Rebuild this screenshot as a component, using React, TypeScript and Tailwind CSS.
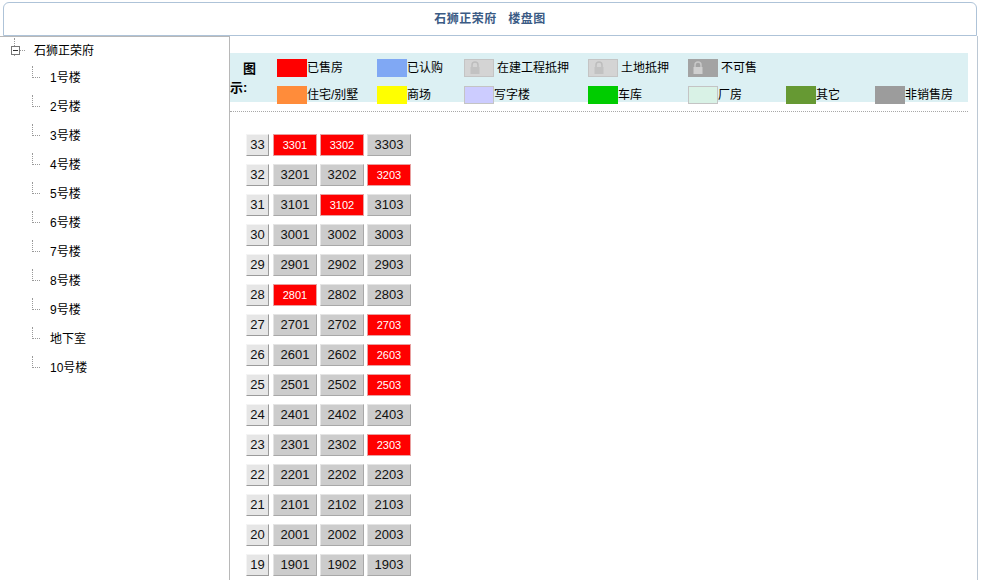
import React from "react";

const font = { fontFamily: '"Liberation Sans", "Noto Sans CJK SC", sans-serif' };

const treeItems = ["1号楼", "2号楼", "3号楼", "4号楼", "5号楼", "6号楼", "7号楼", "8号楼", "9号楼", "地下室", "10号楼"];

const sold = ["3301", "3302", "3203", "3102", "2801", "2703", "2603", "2503", "2303"];

function Lock({ dark }: { dark?: boolean }) {
  return (
    <svg width="12" height="14" viewBox="0 0 12 14" className="ml-[4px]">
      <path d="M3 6V4a3 3 0 0 1 6 0v2" fill="none" stroke={dark ? "#c8c8c8" : "#bdbdbd"} strokeWidth="1.5" />
      <rect x="1.5" y="6" width="9" height="7" fill={dark ? "#cfcfcf" : "#c2c2c2"} />
    </svg>
  );
}

type Legend = { label: string; color: string; lock?: boolean; dark?: boolean; border?: boolean };

const legendRow1: Legend[] = [
  { label: "已售房", color: "bg-[#ff0000]" },
  { label: "已认购", color: "bg-[#80a8f4]" },
  { label: "在建工程抵押", color: "bg-[#d4d4d4]", lock: true, border: true },
  { label: "土地抵押", color: "bg-[#d4d4d4]", lock: true, border: true },
  { label: "不可售", color: "bg-[#a3a3a3]", lock: true, dark: true },
];

const legendRow2: Legend[] = [
  { label: "住宅/别墅", color: "bg-[#ff8c3a]" },
  { label: "商场", color: "bg-[#ffff00]" },
  { label: "写字楼", color: "bg-[#ccccff]", border: true },
  { label: "车库", color: "bg-[#00cc00]" },
  { label: "厂房", color: "bg-[#d9f2e6]", border: true },
  { label: "其它", color: "bg-[#669933]" },
  { label: "非销售房", color: "bg-[#9c9c9c]" },
];

function LegendItem({ item }: { item: Legend }) {
  return (
    <div className="flex items-center h-[27px]">
      <div
        className={`w-[30px] h-[18px] flex items-center ${item.color} ${item.border ? "border border-[#c4c4c4]" : ""}`}
      >
        {item.lock && <Lock dark={item.dark} />}
      </div>
      <span className={`text-[12px] text-black ${item.lock ? "ml-[3px]" : ""}`}>{item.label}</span>
    </div>
  );
}

function Unit({ no }: { no: string }) {
  const isSold = sold.includes(no);
  return isSold ? (
    <div className="w-[44px] h-[22px] flex items-center justify-center bg-[#ff0000] border border-[#e8a0a0] text-white text-[11px]">
      {no}
    </div>
  ) : (
    <div className="w-[44px] h-[22px] flex items-center justify-center bg-[#cccccc] border border-t-[#e4e4e4] border-l-[#e4e4e4] border-b-[#a8a8a8] border-r-[#a8a8a8] text-[#111] text-[13px]">
      {no}
    </div>
  );
}

export default function App() {
  // only the floors that fit in the window
  const floors = Array.from({ length: 15 }, (_, i) => 33 - i);

  return (
    <div className="w-[986px] h-[580px] overflow-hidden bg-white" style={font}>
      <div className="mx-[3px] mt-[2px] w-[974px] h-[34px] border border-[#aec3d8] rounded-t-[6px] flex items-center justify-center">
        <span className="text-[12px] font-bold text-[#3b5b85] tracking-[0.5px]">石狮正荣府&nbsp;&nbsp;&nbsp;楼盘图</span>
      </div>

      <div className="flex h-[544px]">
        <div className="w-[230px] border-r border-t border-[#b8b8b8] pt-[4px]">
          <div className="flex items-center h-[19px]">
            <div className="w-[15px] h-[18px] border-r border-dotted border-[#999] -mt-[8px]" />
            <div className="w-[9px] h-[9px] border border-[#777] flex items-center justify-center -ml-[4px] bg-white">
              <div className="w-[5px] h-px bg-[#333]" />
            </div>
            <div className="w-[5px] border-t border-dotted border-[#999]" />
            <span className="ml-[9px] text-[12px] text-black">石狮正荣府</span>
          </div>
          <div className="flex flex-col">
            {treeItems.map((t) => (
              <div key={t} className="flex items-end h-[29px]">
                <div className="ml-[32px] w-[8px] h-[12px] border-l border-b border-dotted border-[#999] mb-[11px]" />
                <span className="ml-[10px] text-[12px] text-black leading-[14px] mb-[4px]">{t}</span>
              </div>
            ))}
          </div>
        </div>

        <div className="w-[748px] border-r border-[#bcc8d4] pr-[9px] pt-[17px]">
          <div className="flex bg-[#dcf0f3] h-[49px] pt-[1px]">
            <div className="w-[47px] text-[13px] font-bold text-black leading-[19px] pt-[5px]">
              <div className="pl-[13px]">图</div>
              <div>示:</div>
            </div>
            <div className="grid grid-cols-[100px_87px_124px_100px_98px_89px_1fr] content-start">
              {legendRow1.map((l) => (
                <LegendItem key={l.label} item={l} />
              ))}
              <div />
              <div />
              {legendRow2.map((l) => (
                <LegendItem key={l.label} item={l} />
              ))}
            </div>
          </div>
          <div className="mt-[9px] border-t border-dotted border-[#a8a8a8]" />

          <div className="pl-[16px] pt-[22px] flex flex-col gap-[8px]">
            {floors.map((f) => (
              <div key={f} className="flex items-center">
                <div className="w-[23px] h-[22px] flex items-center justify-center bg-[#e6e6e6] border border-t-[#f4f4f4] border-l-[#f4f4f4] border-b-[#9a9a9a] border-r-[#9a9a9a] text-[13px] text-[#111]">
                  {f}
                </div>
                <div className="ml-[4px] flex gap-[3px]">
                  {[1, 2, 3].map((u) => (
                    <Unit key={u} no={`${f}0${u}`} />
                  ))}
                </div>
              </div>
            ))}
          </div>
        </div>
      </div>
    </div>
  );
}
